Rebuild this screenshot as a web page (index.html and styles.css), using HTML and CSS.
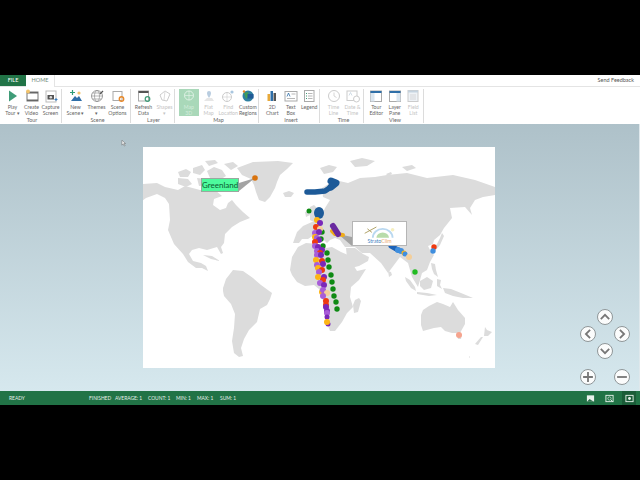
FILE: index.html
```html
<!DOCTYPE html>
<html lang="en">
<head>
    <meta charset="UTF-8">
    <meta name="viewport" content="width=device-width, initial-scale=1.0">
    <title>Power Map</title>
    <link rel="stylesheet" href="styles.css">
</head>
<body>
<div class="app">
    <div class="tabs">
        <span class="tab-file">FILE</span>
        <span class="tab-home">HOME</span>
        <span class="feedback">Send Feedback</span>
    </div>

    <div class="ribbon">
        <div class="group tour">
            <div class="items">
                <div class="item"><svg viewBox="0 0 14 14"><path d="M3 1.5l8 5.5-8 5.5z" fill="#3f9c78"/></svg><span>Play<br>Tour ▾</span></div>
                <div class="item"><svg viewBox="0 0 14 14"><rect x="2" y="3" width="11" height="9" fill="#fff" stroke="#777"/><rect x="2" y="3" width="11" height="1.5" fill="#666"/><rect x="2" y="10.5" width="11" height="1.5" fill="#666"/><circle cx="3" cy="2.5" r="2" fill="#f2c36b"/></svg><span>Create<br>Video</span></div>
                <div class="item"><svg viewBox="0 0 14 14"><rect x="2" y="2" width="10" height="11" fill="#fff" stroke="#bbb"/><rect x="3.5" y="6" width="6.5" height="4.5" fill="#555"/><circle cx="6.8" cy="8.2" r="1.3" fill="#ddd"/><path d="M12 9v3M10.5 10.5h3" stroke="#3a7fc0"/></svg><span>Capture<br>Screen</span></div>
            </div>
            <div class="label">Tour</div>
        </div>
        <div class="group scene">
            <div class="items">
                <div class="item"><svg viewBox="0 0 14 14"><path d="M2 12l4-5 2 2 2-2 3 5z" fill="#2f6fa8"/><circle cx="10" cy="4" r="1.6" fill="#f2c36b"/><path d="M3.5 1v5M1 3.5h5" stroke="#2f9c78" stroke-width="1.2"/></svg><span>New<br>Scene ▾</span></div>
                <div class="item"><svg viewBox="0 0 14 14"><circle cx="7" cy="7" r="5.5" fill="#fff" stroke="#888" stroke-width=".8"/><ellipse cx="7" cy="7" rx="2.5" ry="5.5" fill="none" stroke="#888" stroke-width=".6"/><path d="M1.5 7h11M2.5 4h9M2.5 10h9" stroke="#888" stroke-width=".6"/><path d="M10 5l3-3" stroke="#555" stroke-width="1.2"/></svg><span>Themes<br>▾</span></div>
                <div class="item"><svg viewBox="0 0 14 14"><rect x="2" y="2.5" width="9" height="9" fill="#fff" stroke="#aaa"/><circle cx="10.5" cy="10" r="2.2" fill="none" stroke="#e8892a" stroke-width="1.4"/></svg><span>Scene<br>Options</span></div>
            </div>
            <div class="label">Scene</div>
        </div>
        <div class="group layer">
            <div class="items">
                <div class="item"><svg viewBox="0 0 14 14"><rect x="1.5" y="2" width="10" height="10" fill="#fff" stroke="#aaa"/><rect x="1.5" y="2" width="10" height="2" fill="#555"/><circle cx="10.5" cy="10" r="2.3" fill="none" stroke="#3f9c78" stroke-width="1.2"/></svg><span>Refresh<br>Data</span></div>
                <div class="item off"><svg viewBox="0 0 14 14"><path d="M2 6l5-4 5 3-3 7-5-1z" fill="#fff" stroke="#ccc"/><path d="M7 2l-1 9" stroke="#ddd"/></svg><span>Shapes<br>▾</span></div>
            </div>
            <div class="label">Layer</div>
        </div>
        <div class="group map-tools">
            <div class="items">
                <div class="item off selected"><svg viewBox="0 0 14 14"><circle cx="7" cy="6.5" r="4.5" fill="none" stroke="#dff2e5"/><path d="M2.5 6.5h9M7 2v9" stroke="#dff2e5" stroke-width=".7"/></svg><span>Map<br>3D</span></div>
                <div class="item off"><svg viewBox="0 0 14 14"><path d="M2 12l3-3h5l2 3z" fill="#e6e6e6"/><path d="M7 9C5.5 6.5 5 5.5 5 4a2 2 0 0 1 4 0c0 1.5-.5 2.5-2 5z" fill="#b9cde0"/></svg><span>Flat<br>Map</span></div>
                <div class="item off"><svg viewBox="0 0 14 14"><circle cx="6" cy="8" r="4.5" fill="#fff" stroke="#ccc"/><path d="M1.5 8h9M6 3.5v9" stroke="#ccc" stroke-width=".6"/><circle cx="11" cy="3" r="1.6" fill="#a9c6df"/></svg><span>Find<br>Location</span></div>
                <div class="item"><svg viewBox="0 0 14 14"><circle cx="7" cy="7" r="5.5" fill="#2f7fa0"/><path d="M3 4l4-1 1 4-3 3z" fill="#3f9c58"/><rect x="6.5" y="5" width="6" height="4.5" fill="#1f5a96"/><circle cx="3" cy="2.5" r="1.2" fill="#e8892a"/></svg><span>Custom<br>Regions</span></div>
            </div>
            <div class="label">Map</div>
        </div>
        <div class="group insert">
            <div class="items">
                <div class="item"><svg viewBox="0 0 14 14"><rect x="2.5" y="5" width="2.5" height="7" fill="#e8a93a"/><rect x="5.5" y="2" width="2.5" height="10" fill="#2f6fa8"/><rect x="8.5" y="4" width="2.5" height="8" fill="#555"/></svg><span>2D<br>Chart</span></div>
                <div class="item"><svg viewBox="0 0 14 14"><rect x="1" y="2.5" width="12" height="9.5" fill="#fff" stroke="#aaa"/><path d="M3 7.5l1.5-3.5L6 7.5" fill="none" stroke="#2f6fa8" stroke-width=".8"/><path d="M7.5 5h4M3 9.5h8" stroke="#999" stroke-width=".7"/></svg><span>Text<br>Box</span></div>
                <div class="item"><svg viewBox="0 0 14 14"><rect x="2.5" y="1.5" width="9.5" height="11" fill="#fff" stroke="#aaa"/><path d="M6 4.5h4.5M6 7h4.5M6 9.5h4.5" stroke="#999" stroke-width=".7"/><path d="M4 4.5h1M4 7h1M4 9.5h1" stroke="#3f9c78"/></svg><span>Legend</span></div>
            </div>
            <div class="label">Insert</div>
        </div>
        <div class="group time">
            <div class="items">
                <div class="item off"><svg viewBox="0 0 14 14"><circle cx="7" cy="7" r="5.5" fill="#fff" stroke="#ccc"/><path d="M7 3.5V7l2.5 1.5" fill="none" stroke="#ccc" stroke-width=".8"/></svg><span>Time<br>Line</span></div>
                <div class="item off"><svg viewBox="0 0 14 14"><rect x="1" y="2" width="10" height="9.5" fill="#fff" stroke="#ccc"/><path d="M3 6.5l1.5-3L6 6.5" fill="none" stroke="#c5d3df" stroke-width=".8"/><circle cx="10.5" cy="10" r="3" fill="#fff" stroke="#ccc"/></svg><span>Date &amp;<br>Time</span></div>
            </div>
            <div class="label">Time</div>
        </div>
        <div class="group view">
            <div class="items">
                <div class="item"><svg viewBox="0 0 14 14"><rect x="1.5" y="2" width="11" height="10.5" fill="#fff" stroke="#aaa"/><rect x="1.5" y="2" width="11" height="2" fill="#2f6fa8"/><rect x="1.5" y="4" width="4" height="8.5" fill="#dbe6ef"/></svg><span>Tour<br>Editor</span></div>
                <div class="item"><svg viewBox="0 0 14 14"><rect x="1.5" y="2" width="11" height="10.5" fill="#fff" stroke="#aaa"/><rect x="1.5" y="2" width="11" height="2" fill="#2f6fa8"/><rect x="8.5" y="4" width="4" height="8.5" fill="#dbe6ef"/></svg><span>Layer<br>Pane</span></div>
                <div class="item off"><svg viewBox="0 0 14 14"><rect x="2" y="1.5" width="10" height="11" fill="#eef2f6" stroke="#ccc"/><rect x="2" y="1.5" width="10" height="2" fill="#c5d3df"/><path d="M4 6h6M4 8h6M4 10h6" stroke="#ccc" stroke-width=".7"/></svg><span>Field<br>List</span></div>
            </div>
            <div class="label">View</div>
        </div>
    </div>

    <div class="canvas">
        <div class="map">
            <svg class="world" viewBox="143 147 352 221">
                <g class="land">
                    <!-- americas -->
                    <path d="M143 184l14-1 8 4 13 3 7-4 15 4 15 0 7 6-8 3-1 6 7 5 6-2 2-5 4-3 4 5 7 7 7 6-10 4-8 5-7 7-1 9-3 4 2 6-2 1-4-7-10 3-8-2-7 2-3 4 4 7 8 2 5 3 2 5-6-3-6 0-8-6-5-8-9-10-6-14 2-10-1-16-4-6-8-4-11 4-8 6-6 1v-14z"/>
                    <path d="M203 255l9 1 8 5-9-2zM178 172l8-3 5 3-3 5-8 0zM193 168l9-3 3 5-5 5-7-2zM178 178l10 1 4 5-6 3-8-3zM207 171l7-4 8 3 4 6-8 5-8-3zM197 178l9 1 0 6-7 1zM224 164l9-2 5 4-7 4zM205 161l10-1 3 3-9 3z"/>
                    <path d="M223 288l3-9 7-9 10 1 10 7 8 7 11 8-2 6-3 6-7 4-3 13-8 8-5 9-3 9 2 8-4 1-5-4-2-12 2-13 1-14-4-10-7-8-1-5z"/>
                    <path d="M237 168l16-6 25-1 15 2-6 6-7 6-3 7-2 6-5 9-5 5-6-2-3-8-2-7-3-6-9-4z"/>
                    <path d="M283 193l6-2 5 2-3 4-6 0zM310 207l4-2 4 4 2 10-6 3-4-2zM305 212l4-1 1 4-4 2z"/>
                    <!-- eurasia and africa -->
                    <path d="M297 232l6-6 9-4 8-2 5-12 5-8-7-3-1-9 13-8 13 3 12-5 15-1 12-2 20-2 20 5 26-3 22 5 20 7v8l-12 2-8 3-5 8 2 7-7-8-15 1 2 10-8 10-4 7-6 5-1 4-5 2 2 4 4 5-4 7-3 8-5 3-4 14-6-10-4-14-8-6-12 16-7-10-11-10-8 0-7-6-10 0-5-7-5-2-5 2-3 3-6-6-7-2-6 4-6 0-3 4h-6z"/>
                    <path d="M292 257l6-10 8-4 12 1 8 4 6-1 9 5 7 3 4 8 5 8 9-2-7 11-8 7-1 10 3 10-6 6-5 9-7 9-5 0-4-10-2-13-2-12-3-7-5-4-9 1-8-4-5-7-2-5z"/>
                    <path d="M346 248l9 0 8 6 6 3-1 4-9 5-8 2-4-10z"/>
                    <path d="M355 300l4-2 2 3-3 11-4 1-1-8z"/>
                    <path d="M320 168l9-3 8 2-4 5-9 2zM350 161l12-3 13 3-8 5-12 1zM402 167l10-2 4 3-9 3zM386 174l5-2 1 2-4 2z"/>
                    <!-- asia islands -->
                    <path d="M442 233l2 3-4 9-6 7-3-2 6-6 3-6zM388 271l3 1 1 3-3 2zM431 263l4 1 1 6 2 7-4-3-2-5zM405 277l5 3 5 7 1 4-5-3-5-7zM420 281l7-4 6 4-2 7-7 2-4-4zM417 292l10 1 10 2-8 1-12-2zM437 279l4 1-1 5 2 4-5-3zM443 288l8 1 10 4 12 5-10 0-10-2-8-3z"/>
                    <path d="M423 310l6-4 8-4 6 2 7 3 3-5 5 8 7 8 0 6-5 9-8 0-7-2-4-4-7 1-11 3-2-6 0-10z"/>
                    <path d="M457 334l5 0-1 5-3 0zM485 327l2 3 5 2-4 4-4 0zM483 337l-5 8-3-1 6-7zM469 356l1 1-1 1z"/>
                </g>

                <g class="leader">
                    <path d="M239 183l16-5-16 13z"/>
                    <path d="M352 237l-14-3 14 12z"/>
                </g>

                <path class="trail blue" d="M307 192l8 0 10-1 6-4"/>
                <path class="trail blue-wide" d="M331 181l5 2-5 4"/>
                <ellipse class="c-navy" cx="319" cy="213" rx="5" ry="6"/>
                <circle class="c-green" cx="309" cy="211" r="2.5"/>

                <path class="trail amber" d="M332 231l3 3 8 1"/>
                <path class="trail violet" d="M333 226l5 8"/>

                <path class="trail navy" d="M391 246l7 4"/>
                <circle class="c-sky" cx="398" cy="250" r="3"/>
                <circle class="c-sky" cx="401" cy="251" r="3"/>
                <circle class="c-amber" cx="404" cy="253" r="2.5"/>
                <circle class="c-sky" cx="405" cy="254" r="2.5"/>
                <circle class="c-peach" cx="409" cy="257" r="3"/>

                <g class="c-green">
                    <circle cx="322" cy="232" r="2.7"/><circle cx="321" cy="239" r="2.7"/>
                    <circle cx="323" cy="246" r="2.7"/><circle cx="327" cy="253" r="2.7"/>
                    <circle cx="328" cy="260" r="2.7"/><circle cx="329" cy="267" r="2.7"/>
                    <circle cx="331" cy="275" r="2.7"/><circle cx="332" cy="282" r="2.7"/>
                    <circle cx="333" cy="289" r="2.7"/><circle cx="334" cy="296" r="2.7"/>
                    <circle cx="336" cy="302" r="2.7"/><circle cx="337" cy="309" r="2.7"/>
                </g>

                <circle class="c-amber" cx="317" cy="220" r="3"/>
                <circle class="c-violet" cx="320" cy="223" r="3"/>
                <circle class="c-red" cx="316" cy="227" r="3"/>
                <circle class="c-peach" cx="320" cy="229" r="3"/>
                <circle class="c-lilac" cx="315" cy="233" r="3"/>
                <circle class="c-violet" cx="319" cy="232" r="3"/>
                <circle class="c-amber" cx="315" cy="237" r="3"/>
                <circle class="c-lilac" cx="317" cy="238" r="3"/>
                <circle class="c-violet" cx="319" cy="240" r="3"/>
                <circle class="c-red" cx="315" cy="242" r="3"/>
                <circle class="c-lilac" cx="315" cy="246" r="3"/>
                <circle class="c-violet" cx="318" cy="247" r="3"/>
                <circle class="c-lilac" cx="317" cy="251" r="3"/>
                <circle class="c-violet" cx="322" cy="250" r="3"/>
                <circle class="c-red" cx="320" cy="253" r="3"/>
                <circle class="c-lilac" cx="317" cy="255" r="3"/>
                <circle class="c-violet" cx="321" cy="255" r="3"/>
                <circle class="c-amber" cx="316" cy="260" r="3"/>
                <circle class="c-red" cx="322" cy="261" r="3"/>
                <circle class="c-lilac" cx="317" cy="265" r="3"/>
                <circle class="c-violet" cx="323" cy="264" r="3"/>
                <circle class="c-amber" cx="318" cy="268" r="3"/>
                <circle class="c-red" cx="322" cy="270" r="3"/>
                <circle class="c-lilac" cx="319" cy="272" r="3"/>
                <circle class="c-violet" cx="324" cy="277" r="3"/>
                <circle class="c-amber" cx="318" cy="277" r="3"/>
                <circle class="c-red" cx="323" cy="280" r="3"/>
                <circle class="c-lilac" cx="320" cy="283" r="3"/>
                <circle class="c-violet" cx="324" cy="285" r="3"/>
                <circle class="c-amber" cx="322" cy="292" r="3"/>
                <circle class="c-lilac" cx="323" cy="290" r="3"/>
                <circle class="c-peach" cx="327" cy="293" r="3"/>
                <circle class="c-lilac" cx="323" cy="296" r="3"/>
                <circle class="c-red" cx="326" cy="301" r="3"/>
                <circle class="c-red" cx="326" cy="305" r="3"/>
                <circle class="c-violet" cx="326" cy="307" r="3"/>
                <circle class="c-violet" cx="327" cy="311" r="3"/>
                <circle class="c-lilac" cx="327" cy="313" r="3"/>
                <circle class="c-violet" cx="327" cy="317" r="2.5"/>
                <circle class="c-violet" cx="328" cy="324" r="2.5"/>
                <circle class="c-amber" cx="327" cy="322" r="3"/>

                <circle class="c-red" cx="434" cy="247" r="2.7"/>
                <circle class="c-sky" cx="433" cy="251" r="2.7"/>
                <circle class="c-lime" cx="415" cy="272" r="2.7"/>
                <circle class="c-salmon" cx="459" cy="335" r="3"/>
                <circle class="c-rust" cx="255" cy="178" r="2.8"/>
            </svg>

            <div class="tag-greenland">Greenland</div>
            <div class="tag-logo">
                <svg viewBox="0 0 40 16">
                    <path d="M3 10L16 3" stroke="#a89a5a" fill="none"/>
                    <path d="M6 5l5 4" stroke="#a89a5a" fill="none"/>
                    <path d="M12 15a10 9 0 0 1 22 0" fill="none" stroke="#b9d8f0" stroke-width="2"/>
                    <path d="M16 15a7 6 0 0 1 14 0z" fill="#b8dcaa"/>
                    <circle cx="34" cy="6" r="2" fill="#f6efc0"/>
                </svg>
                <div class="logo-text"><span class="strato">Strato</span><span class="clim">Clim</span></div>
            </div>
        </div>

        <svg class="pointer" viewBox="0 0 6 8"><path d="M1 0v6l1.5-1.5L4 7l1-.5-1.5-2.500H5.500z" fill="#eee" stroke="#555" stroke-width=".5"/></svg>

        <div class="nav">
            <div class="round up"><svg viewBox="0 0 10 10"><path d="M2 6.5L5 3.5l3 3"/></svg></div>
            <div class="round left"><svg viewBox="0 0 10 10"><path d="M6.5 2L3.5 5l3 3"/></svg></div>
            <div class="round right"><svg viewBox="0 0 10 10"><path d="M3.5 2l3 3-3 3"/></svg></div>
            <div class="round down"><svg viewBox="0 0 10 10"><path d="M2 3.5l3 3 3-3"/></svg></div>
            <div class="round plus"><svg viewBox="0 0 10 10"><path d="M1.5 5h7M5 1.5v7"/></svg></div>
            <div class="round minus"><svg viewBox="0 0 10 10"><path d="M1.5 5h7"/></svg></div>
        </div>
    </div>

    <div class="status">
        <span class="ready">READY</span>
        <span class="finished">FINISHED</span>
        <span class="stat-avg">AVERAGE: 1</span>
        <span class="stat-count">COUNT: 1</span>
        <span class="stat-min">MIN: 1</span>
        <span class="stat-max">MAX: 1</span>
        <span class="stat-sum">SUM: 1</span>
        <div class="status-icons">
            <div class="s-icon"><svg viewBox="0 0 10 10"><rect x="1" y="1.5" width="8" height="7" fill="#e8f2ec"/><path d="M1 8.5l3-3 2 1.5 3 1.5z" fill="#2a6e48"/></svg></div>
            <div class="s-icon"><svg viewBox="0 0 10 10"><rect x="1" y="1.5" width="8" height="7" fill="none" stroke="#e8f2ec"/><circle cx="5" cy="5" r="1.8" fill="none" stroke="#e8f2ec" stroke-width=".7"/><path d="M6.5 6.5L8.5 8.5" stroke="#e8f2ec"/></svg></div>
            <div class="s-icon active"><svg viewBox="0 0 10 10"><rect x="1" y="1.5" width="8" height="7" fill="none" stroke="#e8f2ec"/><circle cx="5" cy="5" r="1.6" fill="#e8f2ec"/></svg></div>
        </div>
    </div>
</div>
</body>
</html>
```

FILE: styles.css
```css
body {
    margin: 0;
    height: 480px;
    background: #000;
    overflow: hidden;
    font-family: Lato, "Liberation Sans", sans-serif;
}
.app {
    margin-top: 75px;
    height: 330px;
    display: flex;
    flex-direction: column;
    background: #fff;
}

/* tab row */
.tabs {
    height: 11px;
    flex: none;
    display: flex;
    align-items: stretch;
    font-size: 5.5px;
    line-height: 11px;
    border-bottom: 1px solid #e4e4e4;
}
.tab-file {
    width: 26px;
    text-align: center;
    background: #217346;
    color: #fff;
}
.tab-home {
    width: 28px;
    text-align: center;
    color: #6f8a7c;
    background: #fff;
    border-right: 1px solid #e4e4e4;
    height: 12px;
}
.feedback {
    margin-left: auto;
    margin-right: 6px;
    color: #555;
}

/* ribbon */
.ribbon {
    height: 37px;
    flex: none;
    display: flex;
    background: #fff;
    color: #666;
}
.group {
    height: 34px;
    margin-top: 2px;
    display: flex;
    flex-direction: column;
    border-right: 1px solid #dcdcdc;
    box-sizing: border-box;
}
.items {
    display: flex;
    height: 27px;
}
.label {
    font-size: 5.4px;
    line-height: 8px;
    text-align: center;
    color: #666;
}
.item {
    width: 19px;
    flex: none;
    display: flex;
    flex-direction: column;
    align-items: center;
    font-size: 5.2px;
    line-height: 6.25px;
    text-align: center;
    white-space: nowrap;
}
.item svg {
    width: 14px;
    height: 14px;
    flex: none;
    margin-bottom: 0.5px;
}
.item.off { color: #c4c4c4; }
.item.selected {
    background: #a9d8b9;
    color: #d4ecdc;
}

.tour { width: 62px; padding-left: 3px; }
.scene { width: 69px; padding-left: 3px; }
.scene .item { width: 21px; }
.layer { width: 44px; padding-left: 2px; }
.layer .item { width: 21px; }
.map-tools { width: 84px; padding-left: 4px; }
.map-tools .item { width: 19.7px; }
.insert { width: 61px; padding-left: 4px; }
.insert .item { width: 18.5px; }
.time { width: 44px; padding-left: 4px; }
.view { width: 60px; padding-left: 3px; }
.view .item { width: 18.5px; }

/* scene area */
.canvas {
    flex: 1;
    position: relative;
    background: linear-gradient(#aec1c9, #d6e8ee);
    padding: 23px 0 0 143px;
    border-right: 1px solid #dfe8ec;
}
.map {
    width: 352px;
    height: 221px;
    background: #fff;
    position: relative;
}
.world {
    display: block;
    width: 352px;
    height: 221px;
}
.land { fill: #dcdcdc; }
.leader { fill: #a3a3a3; }

.trail {
    fill: none;
    stroke-linecap: round;
    stroke-linejoin: round;
}
.trail.blue { stroke: #1d5a98; stroke-width: 5.5px; }
.trail.blue-wide { stroke: #1d5a98; stroke-width: 7px; }
.trail.amber { stroke: #f0ac18; stroke-width: 4px; }
.trail.violet { stroke: #6a2aa0; stroke-width: 6px; }
.trail.navy { stroke: #1c62b8; stroke-width: 5px; }

.c-navy { fill: #1d5a98; }
.c-green { fill: #0f8a14; }
.c-lime { fill: #22bb22; }
.c-amber { fill: #fdb515; }
.c-peach { fill: #f4cf9a; }
.c-violet { fill: #7a28b8; }
.c-lilac { fill: #a85cd8; }
.c-red { fill: #ef3a10; }
.c-sky { fill: #3f8ede; }
.c-salmon { fill: #f6a48e; }
.c-rust { fill: #d9730d; }

.tag-greenland {
    position: absolute;
    left: 58px;
    top: 31px;
    width: 38px;
    height: 14px;
    box-sizing: border-box;
    border: 1px solid #9aa89f;
    background: #4dfb9d;
    color: #0b5a30;
    font-size: 8px;
    line-height: 12px;
    text-align: center;
}
.tag-logo {
    position: absolute;
    left: 209px;
    top: 74px;
    width: 55px;
    height: 25px;
    box-sizing: border-box;
    border: 1px solid #b5b5b5;
    background: #fff;
    display: flex;
    flex-direction: column;
    align-items: center;
}
.tag-logo svg {
    width: 36px;
    height: 15px;
    margin-top: 2px;
}
.logo-text {
    font-size: 5.2px;
    line-height: 5px;
}
.strato { color: #3f7fbf; }
.clim { color: #eaa56a; }

.pointer {
    position: absolute;
    left: 121px;
    top: 16px;
    width: 5px;
    height: 7px;
}

/* navigation buttons */
.nav {
    position: absolute;
    right: 9px;
    bottom: 7px;
    width: 50px;
    height: 75px;
    display: grid;
    grid-template-columns: repeat(3, 16px);
    grid-template-rows: 16px 16px 16px 8px 16px;
    column-gap: 1px;
    row-gap: 1px;
    grid-template-areas:
        ". up ."
        "left . right"
        ". down ."
        ". . ."
        "plus . minus";
}
.round {
    width: 16px;
    height: 16px;
    box-sizing: border-box;
    border-radius: 50%;
    background: #fbfcfc;
    border: 1px solid #8f9698;
}
.round svg {
    display: block;
    width: 14px;
    height: 14px;
    fill: none;
    stroke: #777;
    stroke-width: 1.3;
}
.up { grid-area: up; }
.left { grid-area: left; }
.right { grid-area: right; }
.down { grid-area: down; }
.plus { grid-area: plus; }
.minus { grid-area: minus; }

/* status bar */
.status {
    height: 14px;
    flex: none;
    display: flex;
    align-items: center;
    background: #217346;
    color: #e6f0ea;
    font-size: 4.9px;
    white-space: nowrap;
}
.ready { margin-left: 9px; width: 80px; }
.finished { width: 26px; }
.stat-avg { width: 33px; }
.stat-count { width: 28px; }
.stat-min { width: 21px; }
.stat-max { width: 23px; }
.status-icons {
    margin-left: auto;
    margin-right: 4px;
    display: flex;
    gap: 7px;
}
.s-icon {
    width: 12px;
    height: 14px;
    display: flex;
    align-items: center;
    justify-content: center;
}
.s-icon svg {
    width: 9px;
    height: 9px;
}
.s-icon.active { background: #1a5c38; width: 14px; }
```
